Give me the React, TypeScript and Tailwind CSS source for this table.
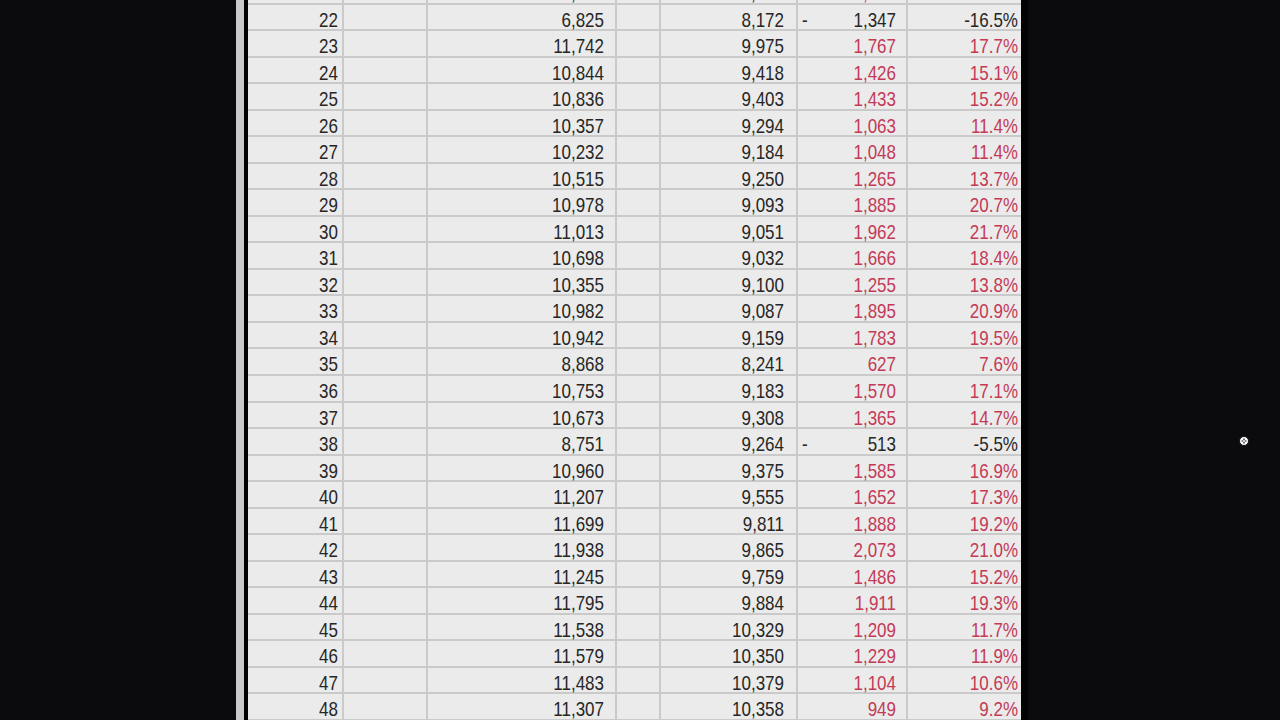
type Row = { n: number; b: string; c: string; d: string; e: string; neg?: boolean };

const ROWS: Row[] = [
  { n: 21, b: "10,462", c: "9,216", d: "1,246", e: "13.5%" },
  { n: 22, b: "6,825", c: "8,172", d: "1,347", e: "-16.5%", neg: true },
  { n: 23, b: "11,742", c: "9,975", d: "1,767", e: "17.7%" },
  { n: 24, b: "10,844", c: "9,418", d: "1,426", e: "15.1%" },
  { n: 25, b: "10,836", c: "9,403", d: "1,433", e: "15.2%" },
  { n: 26, b: "10,357", c: "9,294", d: "1,063", e: "11.4%" },
  { n: 27, b: "10,232", c: "9,184", d: "1,048", e: "11.4%" },
  { n: 28, b: "10,515", c: "9,250", d: "1,265", e: "13.7%" },
  { n: 29, b: "10,978", c: "9,093", d: "1,885", e: "20.7%" },
  { n: 30, b: "11,013", c: "9,051", d: "1,962", e: "21.7%" },
  { n: 31, b: "10,698", c: "9,032", d: "1,666", e: "18.4%" },
  { n: 32, b: "10,355", c: "9,100", d: "1,255", e: "13.8%" },
  { n: 33, b: "10,982", c: "9,087", d: "1,895", e: "20.9%" },
  { n: 34, b: "10,942", c: "9,159", d: "1,783", e: "19.5%" },
  { n: 35, b: "8,868", c: "8,241", d: "627", e: "7.6%" },
  { n: 36, b: "10,753", c: "9,183", d: "1,570", e: "17.1%" },
  { n: 37, b: "10,673", c: "9,308", d: "1,365", e: "14.7%" },
  { n: 38, b: "8,751", c: "9,264", d: "513", e: "-5.5%", neg: true },
  { n: 39, b: "10,960", c: "9,375", d: "1,585", e: "16.9%" },
  { n: 40, b: "11,207", c: "9,555", d: "1,652", e: "17.3%" },
  { n: 41, b: "11,699", c: "9,811", d: "1,888", e: "19.2%" },
  { n: 42, b: "11,938", c: "9,865", d: "2,073", e: "21.0%" },
  { n: 43, b: "11,245", c: "9,759", d: "1,486", e: "15.2%" },
  { n: 44, b: "11,795", c: "9,884", d: "1,911", e: "19.3%" },
  { n: 45, b: "11,538", c: "10,329", d: "1,209", e: "11.7%" },
  { n: 46, b: "11,579", c: "10,350", d: "1,229", e: "11.9%" },
  { n: 47, b: "11,483", c: "10,379", d: "1,104", e: "10.6%" },
  { n: 48, b: "11,307", c: "10,358", d: "949", e: "9.2%" },
  { n: 49, b: "11,102", c: "10,214", d: "888", e: "8.7%" },
];

const cell = "flex h-full items-center border-r-2 border-[#cacaca] pt-[3px]";

function Txt({ children }: { children: React.ReactNode }) {
  return <span className="inline-block scale-y-[1.2]">{children}</span>;
}

function SheetRow({ row }: { row: Row }) {
  const tone = row.neg ? "text-[#262626]" : "text-[#c33a56]";
  return (
    <div className="grid h-[26.54px] shrink-0 grid-cols-[96px_84px_189px_44px_137px_110px_113px] border-b-2 border-[#cacaca] text-[#262626]">
      <div className={`${cell} justify-end pr-[4px]`}>
        <Txt>{row.n}</Txt>
      </div>
      <div className={cell} />
      <div className={`${cell} justify-end pr-[11px]`}>
        <Txt>{row.b}</Txt>
      </div>
      <div className={cell} />
      <div className={`${cell} justify-end pr-[12px]`}>
        <Txt>{row.c}</Txt>
      </div>
      <div className={`${cell} justify-between pl-[4px] pr-[10px] ${tone}`}>
        <Txt>{row.neg ? "-" : ""}</Txt>
        <Txt>{row.d}</Txt>
      </div>
      <div className={`flex h-full items-center justify-end pt-[3px] pr-[3px] ${tone}`}>
        <Txt>{row.e}</Txt>
      </div>
    </div>
  );
}

export default function App() {
  return (
    <div className="relative flex h-[720px] w-[1280px] overflow-hidden bg-[#0b0b0e] font-['Liberation_Sans',Arial,sans-serif] text-[17px]">
      {/* sheet edge */}
      <div className="ml-[236px] w-[8px] bg-[#c9c9c9]" />
      <div className="w-[4px] bg-black" />

      {/* grid */}
      <div className="-mt-[22px] flex w-[773px] flex-col bg-[#ebebeb]">
        {ROWS.map((r) => (
          <SheetRow key={r.n} row={r} />
        ))}
      </div>

      <div className="w-[7px] bg-[#030303]" />

      {/* mouse cursor */}
      <svg viewBox="0 0 12 12" className="absolute left-[1238px] top-[435px] h-[12px] w-[12px]">
        <circle cx="6" cy="6" r="4.5" fill="#fff" stroke="#111" strokeWidth="1" />
        <path d="M6 3.5v5M3.5 6h5" stroke="#111" strokeWidth="1.2" />
        <circle cx="6" cy="6" r="1" fill="#fff" />
      </svg>
    </div>
  );
}
